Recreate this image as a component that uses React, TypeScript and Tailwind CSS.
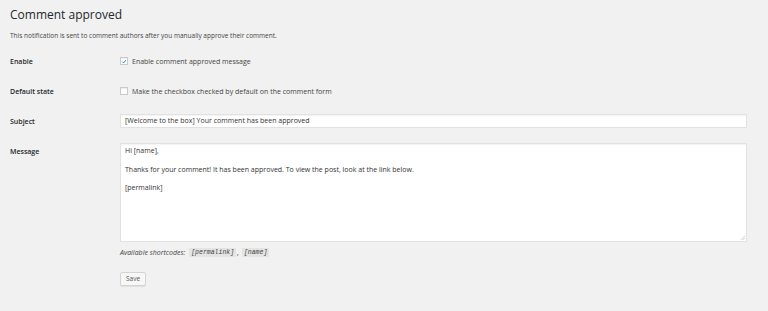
import React from 'react';

const Checkbox: React.FC<{ checked?: boolean }> = ({ checked }) => (
  <span className="flex h-[8px] w-[8px] items-center justify-center border border-[#c8cbce] bg-white shadow-[inset_0_1px_1px_rgba(0,0,0,0.08)]">
    {checked && (
      <svg viewBox="0 0 10 10" className="h-[7px] w-[7px]">
        <path d="M2 5.2 L4.2 7.4 L8.2 2.6" fill="none" stroke="#1e8cbe" strokeWidth="1.6" />
      </svg>
    )}
  </span>
);

const Row: React.FC<{ label: string; children: React.ReactNode; top?: boolean; className?: string }> = ({
  label,
  children,
  top,
  className,
}) => (
  <div className={`flex ${top ? 'items-start' : 'items-center'} ${className ?? ''}`}>
    <div className={`w-[110px] shrink-0 text-[7px] font-semibold leading-[9px] text-[#23282d] ${top ? 'pt-[4px]' : ''}`}>
      {label}
    </div>
    <div className="flex-1">{children}</div>
  </div>
);

const App: React.FC = () => {
  const message = 'Hi [name],\n\nThanks for your comment! It has been approved. To view the post, look at the link below.\n\n[permalink]';

  return (
    <div className="min-h-[311px] bg-[#f1f1f1] pl-[10px] pr-[21px] pt-[6px] font-['Open_Sans',sans-serif] text-[#444]">
      <h2 className="text-[12px] font-normal leading-[18px] text-[#23282d]">Comment approved</h2>
      <p className="mt-[7px] text-[6.5px] leading-[9px]">
        This notification is sent to comment authors after you manually approve their comment.
      </p>

      <Row label="Enable" className="mt-[12px] h-[18px]">
        <label className="flex items-center gap-[4px] text-[7px] leading-[9px]">
          <Checkbox checked />
          Enable comment approved message
        </label>
      </Row>

      <Row label="Default state" className="mt-[12px] h-[18px]">
        <label className="flex items-center gap-[4px] text-[7px] leading-[9px]">
          <Checkbox />
          Make the checkbox checked by default on the comment form
        </label>
      </Row>

      <Row label="Subject" className="mt-[14px]">
        <div className="flex h-[14px] items-center border border-[#e2e2e2] bg-white px-[4px] text-[7px] text-[#333] shadow-[inset_0_1px_1px_rgba(0,0,0,0.05)]">
          [Welcome to the box] Your comment has been approved
        </div>
      </Row>

      <Row label="Message" top className="mt-[15px]">
        <div className="relative">
          <textarea
            readOnly
            value={message}
            className="block h-[99px] w-full resize-none border border-[#e2e2e2] bg-white px-[4px] pt-[2px] text-[7px] leading-[9.3px] text-[#333] shadow-[inset_0_1px_1px_rgba(0,0,0,0.05)] outline-none"
          />
          <svg viewBox="0 0 6 6" className="absolute bottom-[2px] right-[2px] h-[5px] w-[5px]">
            <path d="M6 1 L1 6 M6 3.5 L3.5 6" stroke="#b8b8b8" strokeWidth="0.8" />
          </svg>
        </div>
        <p className="mt-[6px] flex items-center text-[7px] italic leading-[9px]">
          Available shortcodes:
          <code className="ml-[4px] bg-[#e4e4e4] px-[2px] font-['Liberation_Mono',monospace] text-[6.5px] italic">[permalink]</code>
          <span className="mx-[1px]">,</span>
          <code className="ml-[2px] bg-[#e4e4e4] px-[2px] font-['Liberation_Mono',monospace] text-[6.5px] italic">[name]</code>
        </p>
        <button className="mt-[15px] flex h-[14px] w-[26px] items-center justify-center rounded-[2px] border border-[#d4d4d4] bg-[#f7f7f7] text-[6.5px] text-[#555] shadow-[0_1px_0_#e0e0e0]">
          Save
        </button>
      </Row>
    </div>
  );
};

export default App;
